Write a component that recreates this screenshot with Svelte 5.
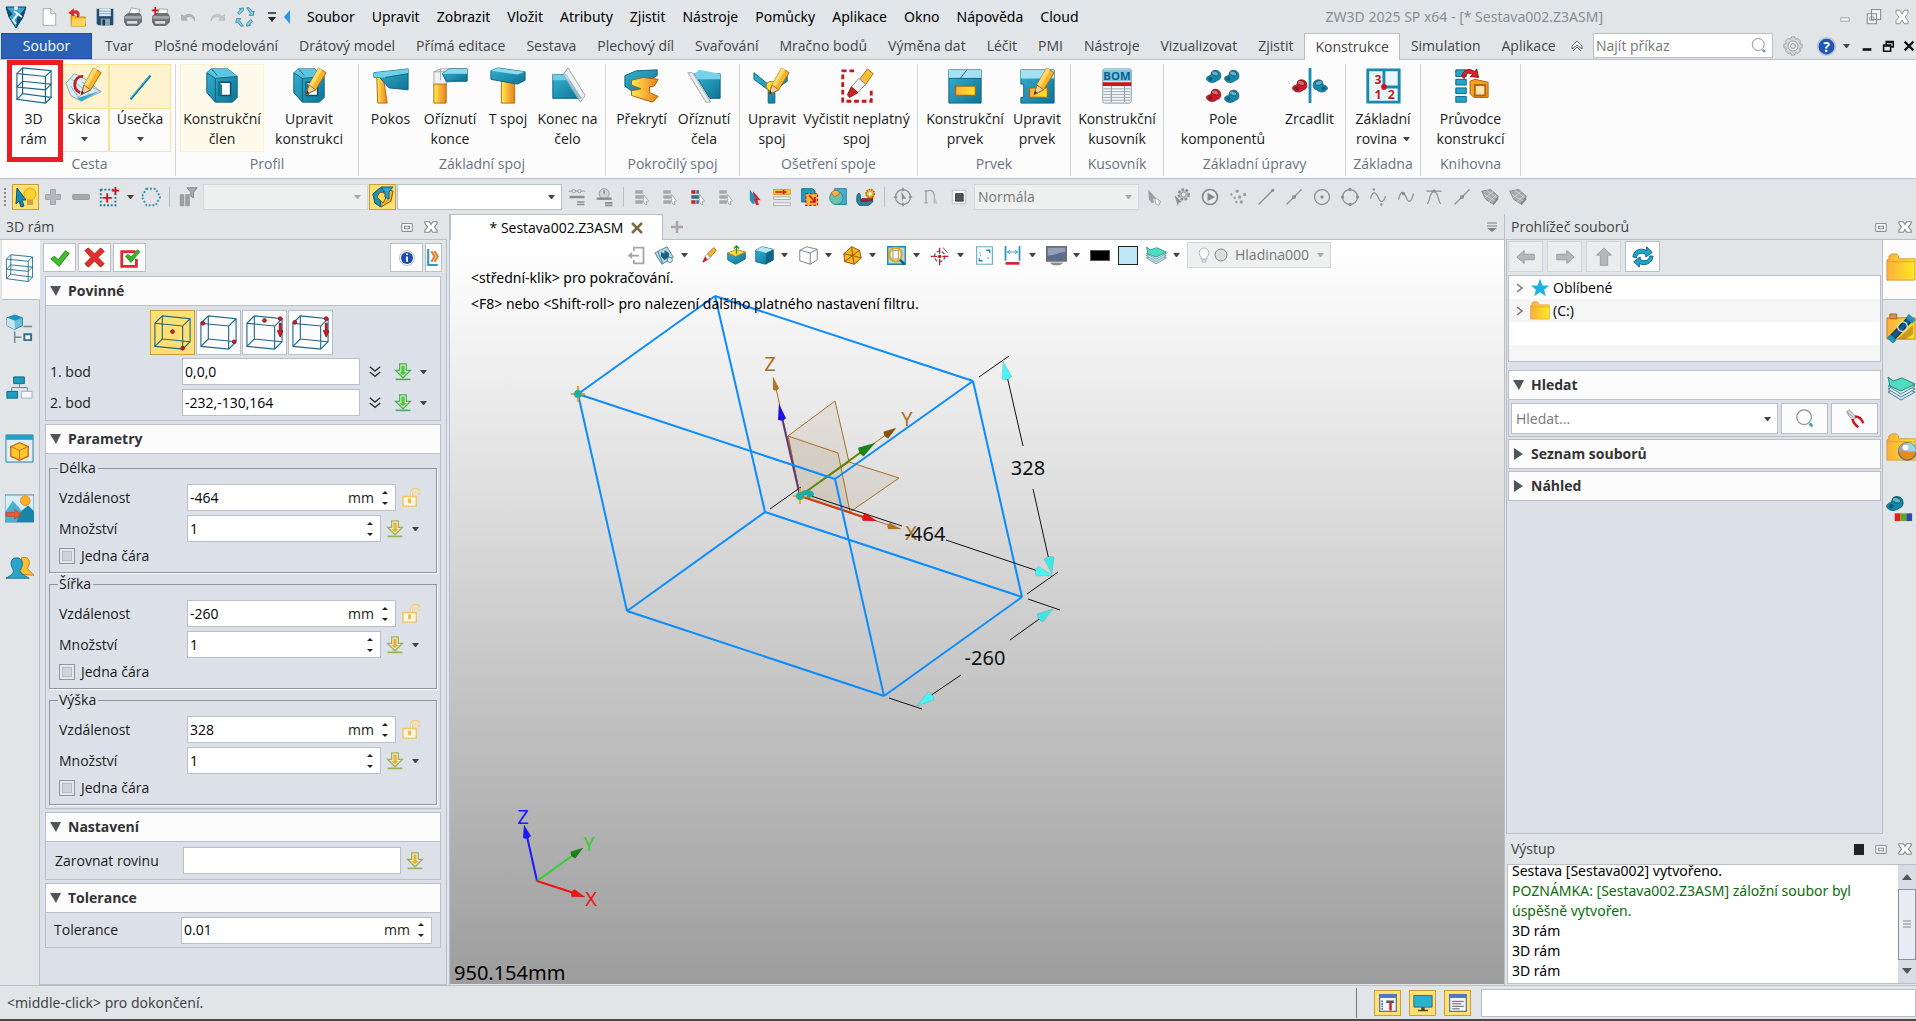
<script>
  const menus = ['Soubor', 'Upravit', 'Zobrazit', 'Vložit', 'Atributy', 'Zjistit', 'Nástroje', 'Pomůcky', 'Aplikace', 'Okno', 'Nápověda', 'Cloud']

  const tabs = [
    'Tvar', 'Plošné modelování', 'Drátový model', 'Přímá editace', 'Sestava', 'Plechový díl', 'Svařování',
    'Mračno bodů', 'Výměna dat', 'Léčit', 'PMI', 'Nástroje', 'Vizualizovat', 'Zjistit', 'Konstrukce', 'Simulation', 'Aplikace'
  ]
  let activeTab = 'Konstrukce'

  const groups = [
    { name: 'Cesta', tools: [
      { icon: 'frame', lines: ['3D', 'rám'], width: 51, marked: true },
      { icon: 'sketch', lines: ['Skica'], width: 50, drop: true },
      { icon: 'line', lines: ['Úsečka'], width: 62, drop: true }
    ] },
    { name: 'Profil', tools: [
      { icon: 'member', lines: ['Konstrukční', 'člen'], width: 84, soft: true },
      { icon: 'memberEdit', lines: ['Upravit', 'konstrukci'], width: 90 }
    ] },
    { name: 'Základní spoj', tools: [
      { icon: 'miter', lines: ['Pokos'], width: 55 },
      { icon: 'trimEnd', lines: ['Oříznutí', 'konce'], width: 64 },
      { icon: 'tJoint', lines: ['T spoj'], width: 52 },
      { icon: 'endFace', lines: ['Konec na', 'čelo'], width: 67 }
    ] },
    { name: 'Pokročilý spoj', tools: [
      { icon: 'overlap', lines: ['Překrytí'], width: 63 },
      { icon: 'trimFace', lines: ['Oříznutí', 'čela'], width: 62 }
    ] },
    { name: 'Ošetření spoje', tools: [
      { icon: 'jointEdit', lines: ['Upravit', 'spoj'], width: 56 },
      { icon: 'jointClean', lines: ['Vyčistit neplatný', 'spoj'], width: 113 }
    ] },
    { name: 'Prvek', tools: [
      { icon: 'feature', lines: ['Konstrukční', 'prvek'], width: 86 },
      { icon: 'featureEdit', lines: ['Upravit', 'prvek'], width: 58 }
    ] },
    { name: 'Kusovník', tools: [
      { icon: 'bom', lines: ['Konstrukční', 'kusovník'], width: 84 }
    ] },
    { name: 'Základní úpravy', tools: [
      { icon: 'pattern', lines: ['Pole', 'komponentů'], width: 110 },
      { icon: 'mirror', lines: ['Zrcadlit'], width: 63 }
    ] },
    { name: 'Základna', tools: [
      { icon: 'datum', lines: ['Základní', 'rovina'], width: 66, inlineDrop: true }
    ] },
    { name: 'Knihovna', tools: [
      { icon: 'library', lines: ['Průvodce', 'konstrukcí'], width: 91 }
    ] }
  ]

  const snapA = ['list', 'list', 'listRed', 'list', 'cursorRed', 'rows', 'layersSel', 'globe', 'gearCup']
  const snapB = ['cursorGray', 'cursorGear', 'play', 'dots', 'lineEnd', 'lineMid', 'circleDot', 'circle', 'wave', 'wave2', 'tangent', 'lineMid', 'mesh', 'mesh']

  const viewTools = [
    { icon: 'exit' },
    { icon: 'views', drop: true },
    { icon: 'eraser' },
    { icon: 'cubeTop' },
    { icon: 'cubeSolid', drop: true },
    { icon: 'cubeWire', drop: true },
    { icon: 'facet', drop: true },
    { icon: 'zoomFit', drop: true },
    { icon: 'target', drop: true },
    { icon: 'corners' },
    { icon: 'dimension', drop: true },
    { icon: 'monitor', drop: true }
  ]

  let dims = [
    { name: 'Délka', distance: '-464', count: '1' },
    { name: 'Šířka', distance: '-260', count: '1' },
    { name: 'Výška', distance: '328', count: '1' }
  ]
  let points = [
    { label: '1. bod', value: '0,0,0' },
    { label: '2. bod', value: '-232,-130,164' }
  ]
  const leftTabs = ['frame', 'history', 'structure', 'viewBox', 'scene', 'users']
  const rightTabs = ['folderBig', 'folderBolt', 'layers', 'folderBall', 'partColors']
  const boxModes = ['boxCenter', 'boxCorners', 'boxCenterH', 'boxCornerH']

  // corners of the frame: upper four first, lower four after
  const v = [[715, 296], [578, 394], [835, 479], [973, 381], [765, 512], [627, 611], [884, 696], [1022, 597]]
  const edges = [[0, 1], [1, 2], [2, 3], [3, 0], [4, 5], [5, 6], [6, 7], [7, 4], [0, 4], [1, 5], [2, 6], [3, 7]]

  function cone(tx, ty, bx, by, w) {
    const len = Math.hypot(bx - tx, by - ty)
    const nx = (-(by - ty) / len) * w
    const ny = ((bx - tx) / len) * w
    const ex = bx + ((bx - tx) / len) * 3
    const ey = by + ((by - ty) / len) * 3
    return `M${tx} ${ty}L${bx + nx} ${by + ny}Q${ex} ${ey} ${bx - nx} ${by - ny}Z`
  }

  const cones = [
    { d: cone(773, 377, 776, 389, 3), fill: '#b8761c' },
    { d: cone(779, 404, 782, 419, 4), fill: '#1a12e0' },
    { d: cone(896, 428, 886, 435, 4), fill: '#8a5208' },
    { d: cone(875, 443, 861, 452, 5), fill: '#1c8414' },
    { d: cone(901, 529, 889, 526, 3), fill: '#b8761c' },
    { d: cone(877, 521, 864, 517, 4), fill: '#ee1010' },
    { d: cone(1003, 361, 1007, 378, 5), fill: '#48f4f4' },
    { d: cone(1052, 574, 1049, 558, 5), fill: '#40e8e8' },
    { d: cone(1053, 576, 1037, 571, 5), fill: '#48f4f4' },
    { d: cone(1053, 609, 1040, 618, 5), fill: '#40e4e4' },
    { d: cone(917, 706, 931, 696, 5), fill: '#48f4f4' },
    { d: cone(524, 825, 527, 837, 4), fill: '#1a1aff' },
    { d: cone(583, 848, 573, 855, 4), fill: '#1c8414' },
    { d: cone(585, 897, 573, 893, 4), fill: '#f01414' }
  ]

  const wire = '<path d="M1 10L9 2 39 5 31 13ZM1 10V35L31 38V13M31 38L39 30V5M1 35L9 27V2M9 27L39 30" fill="none" stroke="#1d6688" stroke-width="1.2"/>'
  const pencil = '<path d="M17 29L20 19 30 1 38 6 27 24Z" fill="#f7b52c" stroke="#a9651b"/><path d="M20 19L30 1 34 3 23 22Z" fill="#ffd968"/><path d="M17 29L20 19 27 24Z" fill="#f3d3a6" stroke="#a9651b"/><path d="M17 29L18 25 20 27Z" fill="#222"/>'
  const tube = '<path d="M4 6L9 2H26L36 10V32L31 37H13L4 27Z" fill="url(#teal)" stroke="#10627e"/><path d="M4 6L9 2H26L36 10 14 12Z" fill="#5cc6e0"/><path d="M4 6L13 12 36 10M13 12V37M9 2L15 9" fill="none" stroke="#0d5f7c"/><path d="M17 16H29V30H17Z" fill="#fff" stroke="#0d4d66" stroke-width="1.5"/><path d="M17 16L20 19V30H17Z" fill="#117c9d"/>'
  const part = '<path d="M1 14C0 11 3 9 6 9L8 4C11 0 18 2 19 6 21 11 18 15 15 15 11 19 4 19 1 14Z" stroke-width="1"/><ellipse cx="12" cy="6" rx="5" ry="3" fill="#fff" fill-opacity=".35" transform="rotate(20 12 6)"/><circle cx="6" cy="13" r="2" fill="#083c52" fill-opacity=".5"/>'
  const folder = '<path d="M1 7H3V3L6 1H11L13 3V6H30V28H1Z" fill="url(#gold)" stroke="#d79a3a"/><path d="M1 9H30" stroke="#e0a030"/>'
  const down = (a, b) => `<path d="M7 1H15V9H20L11 18 2 9H7Z" fill="#f4f6ea" stroke="${b}" stroke-width="1.6"/><path d="M9 3H13V11H16L11 15 6 11H9Z" fill="${a}"/><path d="M2 20H20" stroke="${b}" stroke-width="2"/>`

  const icons = {
    frame: ['40', '<path d="M2 7L8 1 38 4 32 10ZM2 21L8 15 38 18 32 24ZM2 34L8 28 38 32 32 38ZM2 7V34M32 10V38M38 4V32M8 1V28" fill="none" stroke="#1d6688" stroke-width="1.2"/>'],
    sketch: ['40', '<path d="M1 17L10 7 20 12 38 26 17 36 6 30Z" fill="#dcecf4" stroke="#8ba7b5"/><path d="M6 12L27 30M11 34L31 20M17 36L6 20M38 26L18 16" stroke="#7db9d6" fill="none"/><path d="M13 33L37 25 17 36Z" fill="#37a9d0"/><path d="M19 10C9 9 7 24 16 27" fill="none" stroke="#c91820" stroke-width="3"/>' + pencil],
    line: ['40', '<path d="M10 34L31 9" stroke="#0f7b9d" stroke-width="2.4"/><path d="M10 33L30 9" stroke="#58c0dc"/>'],
    member: ['40', tube],
    memberEdit: ['40', tube + pencil],
    miter: ['40', '<path d="M5 11H12L16 38H6Z" fill="url(#wood)" stroke="#b16a12"/><path d="M2 6L38 2V24L18 22 8 11H2Z" fill="url(#teal)" stroke="#10627e"/><path d="M2 6L38 2V7L14 11H2Z" fill="#6fd0e8"/><path d="M14 11L38 7" stroke="#0d5f7c"/>'],
    trimEnd: ['40', '<path d="M3 5L10 2 38 2V14L16 16 16 20H3Z" fill="#eef0f1" stroke="#a4a9ad"/><path d="M3 5H16V20M10 2V14" fill="none" stroke="#a4a9ad"/><path d="M3 18H16V38H3Z" fill="url(#wood)" stroke="#b16a12"/><path d="M12 7L19 2H38V15H16Z" fill="url(#teal)" stroke="#10627e"/><path d="M12 7L19 2H38V7Z" fill="#8adbef"/>'],
    tJoint: ['40', '<path d="M13 15H27V38H13Z" fill="url(#wood)" stroke="#b16a12"/><path d="M2 4L9 1 38 5V14L30 18 2 13Z" fill="url(#teal)" stroke="#10627e"/><path d="M2 4L9 1 38 5 30 8Z" fill="#8adbef"/>'],
    endFace: ['40', '<path d="M4 8H18L34 33H4Z" fill="url(#teal)" stroke="#10627e"/><path d="M4 8H18L22 14H4Z" fill="#6fcde6"/><path d="M15 8L20 1 38 30 33 37Z" fill="#e6eaec" fill-opacity=".6" stroke="#9ba1a6"/>'],
    overlap: ['40', '<path d="M2 9L14 4 36 3V9L28 14V22L10 26 2 20Z" fill="url(#teal)" stroke="#10627e"/><path d="M9 14L21 11 37 13 33 20 28 21V27L37 31 31 37 9 30V25L19 23 9 19Z" fill="url(#wood)" stroke="#a55b0b"/>'],
    trimFace: ['40', '<path d="M10 7H37V33H26Z" fill="url(#teal)" stroke="#10627e"/><path d="M10 7L15 3 37 7V13H13Z" fill="#76d2e9"/><path d="M3 6H8L27 37H22Z" fill="#e8ebed" stroke="#a0a5a9"/>'],
    jointEdit: ['40', '<path d="M1 6L17 19 36 7V15L23 24V38H16V24L1 13Z" fill="url(#teal)" stroke="#10627e"/><circle cx="19" cy="20" r="5" fill="#ffd83a" stroke="#b48410"/>' + pencil],
    jointClean: ['40', '<path d="M17 4H5V36H35V24" fill="none" stroke="#c4161c" stroke-width="3" stroke-dasharray="5 3"/><path d="M22 14L31 2 37 7 28 20Z" fill="#f7bf36" stroke="#a9651b"/><path d="M14 21L22 12 29 18 21 27Z" fill="#f1f1f1" stroke="#888"/><path d="M14 21L21 27 12 32 10 29Z" fill="#cf2027" stroke="#8d1015"/>'],
    feature: ['40', '<path d="M3 3H37V38H3Z" fill="url(#teal)" stroke="#10627e"/><path d="M3 3H37V12H3Z" fill="#a4e1f1"/><path d="M15 12L22 3" stroke="#10627e"/><path d="M3 12H37" stroke="#10627e"/><path d="M10 20H31V30H10Z" fill="url(#gold)" stroke="#a9651b" stroke-width="1.5"/>'],
    featureEdit: ['40', '<path d="M3 3H38V38H3V32H6V18H3Z" fill="url(#teal)" stroke="#10627e"/><path d="M3 3H38V12H3Z" fill="#a4e1f1"/><path d="M12 22H31V32H12Z" fill="url(#gold)" stroke="#a9651b" stroke-width="1.5"/>' + pencil],
    bom: ['40', '<rect x="5" y="2" width="30" height="36" rx="2" fill="#f3f6f8" stroke="#7f97a6"/><path d="M5 3H35V15H5Z" fill="#79c8e6"/><path d="M5 16H35V20H5Z" fill="#d3131c"/><path d="M6 23H34M6 26H34M6 29H34M6 32H34M6 35H34" stroke="#9ba8b1"/><path d="M14 20V37M28 20V37" stroke="#7f97a6"/><text x="20" y="14" font-size="12" font-weight="700" text-anchor="middle" fill="#115d86">BOM</text>'],
    pattern: ['40', `<g fill="#1388ab" stroke="#0a556e"><g transform="translate(2 2) scale(.8)">${part}</g><g transform="translate(21 2) scale(.8)">${part}</g><g transform="translate(21 23) scale(.8)">${part}</g><g transform="translate(2 22) scale(.8)" fill="#c91d26" stroke="#7d0d13">${part}</g></g>`],
    mirror: ['40', `<g transform="translate(1 12) scale(.8)" fill="#c91d26" stroke="#7d0d13">${part}</g><g transform="matrix(-.8 0 0 .8 39 12)" fill="#1388ab" stroke="#0a556e">${part}</g><path d="M20 1V38" stroke="#1a8db0" stroke-width="3"/>`],
    datum: ['40', '<path d="M4 3H37V37H4Z" fill="#e9f7fc" stroke="#1988ab" stroke-width="3"/><path d="M21 3V21H37" fill="none" stroke="#1988ab" stroke-width="3"/><circle cx="21" cy="21" r="3" fill="#d3131c"/><g font-size="13" font-weight="700" fill="#c91820"><text x="11" y="18">3</text><text x="11" y="34">1</text><text x="25" y="34">2</text></g>'],
    library: ['40', '<path d="M4 3H15V10H4ZM4 13H15V19H4ZM4 22H15V28H4ZM4 31H15V37H4Z" fill="#24a6cb" stroke="#10627e"/><path d="M10 10C12 2 19 1 24 5L26 2 28 11 19 10 22 8C18 5 14 7 13 12Z" fill="#d8222b" stroke="#9b1016"/><path d="M19 15L24 13 38 16V32L33 32H23L19 28Z" fill="#f5a21e" stroke="#a55b0b"/><path d="M24 19H35V30H24Z" fill="#fbe3b4" stroke="#b4640b" stroke-width="2"/>'],

    logo: ['24', '<path d="M2 2H22L19 12 12 23 5 12Z" fill="#3aa6d6" stroke="#0a3f5e"/><path d="M2 2L9 9 5 12ZM22 2L13 13 12 23 19 12Z" fill="#0b4a70"/><path d="M10 6L14 9 9 15 12 19M14 9L18 12" fill="none" stroke="#e8f4fa" stroke-width="2"/><circle cx="12" cy="3" r="2" fill="#e8f4fa"/>'],
    newDoc: ['24', '<path d="M5 2H14L20 8V22H5Z" fill="#fdfdfd" stroke="#9da5ad"/><path d="M14 2V8H20" fill="#dfe4e8" stroke="#9da5ad"/>'],
    open: ['24', '<path d="M5 10H9L11 12H22V23H5Z" fill="#f8bb2f" stroke="#b97d10"/><path d="M7 14H23L21 23H5Z" fill="#ffd45c"/><path d="M14 12C17 5 11 3 8 5V2L2 7 8 11V8C11 7 13 8 12 12Z" fill="#dd2a22" stroke="#a01712" stroke-width=".5"/>'],
    save: ['24', '<path d="M2 2H22V22H4L2 20Z" fill="#234d6b"/><path d="M5 2H19V11H5Z" fill="#d9eef7"/><path d="M5 5H19M5 8H19" stroke="#67a7c6"/><path d="M7 14H18V22H7Z" fill="#8ba4b3"/><path d="M9 15H12V22H9Z" fill="#16364c"/>'],
    print: ['24', '<path d="M7 8L10 1 20 3 18 11Z" fill="#f6f6f6" stroke="#999"/><path d="M2 11L6 8H20L22 11V18L18 22H4L2 18Z" fill="#70757a" stroke="#4a4e52"/><path d="M2 11H22V14H2Z" fill="#a6abb0"/><path d="M5 17H17V20H5Z" fill="#e2e4e6"/>'],
    printAdd: ['24', '<path d="M8 8L10 2 20 3 18 11Z" fill="#f6f6f6" stroke="#999"/><path d="M2 11L6 8H20L22 11V18L18 22H4L2 18Z" fill="#70757a" stroke="#4a4e52"/><path d="M2 11H22V14H2Z" fill="#a6abb0"/><path d="M5 17H17V20H5Z" fill="#e2e4e6"/><path d="M5 0V9M1 4H9" stroke="#d3131c" stroke-width="2"/>'],
    undo: ['24', '<path d="M3 9V16H10L8 13C13 10 17 12 19 17 20 10 12 6 6 11Z" fill="#b0b4b8" stroke="#8d9195" stroke-width=".5"/>'],
    redo: ['24', '<path d="M21 9V16H14L16 13C11 10 7 12 5 17 4 10 12 6 18 11Z" fill="#c5c8cb" stroke="#a2a6aa" stroke-width=".5"/>'],
    refresh: ['24', '<g fill="#8fd3e8" stroke="#23809f"><path d="M10 1V4L5 9 3 7 7 3 5 2ZM14 1H17L21 6 23 5 22 10 17 10 19 8ZM14 23V20L19 15 21 17 17 21 19 22ZM10 23H7L3 18 1 19 2 14 7 14 5 16Z"/></g>'],
    gear: ['24', '<path d="M10 1H14L15 4 18 3 21 6 20 9 23 10V14L20 15 21 18 18 21 15 20 14 23H10L9 20 6 21 3 18 4 15 1 14V10L4 9 3 6 6 3 9 4Z" fill="#d6d6d6" stroke="#989898"/><circle cx="12" cy="12" r="6" fill="#f0f0f0" stroke="#8d8d8d"/><circle cx="12" cy="12" r="3" fill="#e1e5e8" stroke="#8d8d8d"/>'],
    help: ['24', '<circle cx="12" cy="12" r="10" fill="#2056b8" stroke="#bcc4d0" stroke-width="2"/><text x="12" y="18" text-anchor="middle" font-size="16" font-weight="700" fill="#fff">?</text>'],
    search: ['24', '<circle cx="11" cy="10" r="8" fill="none" stroke="#8b8f93" stroke-width="1.3"/><path d="M17 17L20 20" stroke="#4a9cc0" stroke-width="3"/>'],
    winMin: ['24', '<path d="M7 13H17V17H7Z" fill="#fff" stroke="#8b8b8b"/>'],
    winRestore: ['24', '<path d="M9 3H20V15H9ZM4 8H15V20H4Z" fill="#f2f2f2" stroke="#8b8b8b" stroke-width="1.3"/><path d="M7 12H12V16H7Z" fill="none" stroke="#8b8b8b"/>'],
    winClose: ['24', '<path d="M4 3H9L12 8 15 3H20V7L16 12 20 17V21H15L12 16 9 21H4V17L8 12 4 7Z" fill="#fff" stroke="#8b8b8b" stroke-width="1.3"/>'],
    pin: ['16', '<rect x="2" y="4" width="12" height="9" rx="1" fill="#fff" stroke="#8b8f93" stroke-width="1.3"/><rect x="5" y="7" width="6" height="3" fill="none" stroke="#777"/>'],
    close: ['16', '<path d="M1 2H6L8 5 10 2H15V4L12 8 15 12V14H10L8 11 6 14H1V12L4 8 1 4Z" fill="#fff" stroke="#85898d" stroke-width="1.3"/>'],
    mdiMin: ['16', '<path d="M3 12H13" stroke="#111" stroke-width="3"/>'],
    mdiRestore: ['16', '<path d="M6 6V3H14V9H11M3 7H11V14H3ZM3 8H11M6 4H14" fill="none" stroke="#111" stroke-width="1.8"/>'],
    mdiClose: ['16', '<path d="M3 3L13 13M13 3L3 13" stroke="#111" stroke-width="2.5"/>'],
    hide: ['16', '<path d="M3 8L8 3 13 8V11L8 7 3 11Z" fill="#fff" stroke="#666"/><path d="M4 13L8 9 12 13" fill="none" stroke="#666"/>'],

    pick: ['24', '<path d="M3 3L12 15 8 15 10 21 7 22 5 16 2 19Z" fill="#1b8db3" stroke="#0d5671"/><circle cx="16" cy="9" r="6" fill="#ffd12f" stroke="#e8a212"/><path d="M13 15H19V20H13Z" fill="#c9a24b"/>'],
    plus: ['24', '<path d="M9 3H15V9H21V15H15V21H9V15H3V9H9Z" fill="#b5b9bd" stroke="#989ca0"/>'],
    minus: ['24', '<rect x="2" y="9" width="20" height="6" rx="1" fill="#a5a9ad" stroke="#909498"/>'],
    selAdd: ['24', '<path d="M3 4H19V21H3Z" fill="none" stroke="#23738f" stroke-width="2" stroke-dasharray="2 2"/><path d="M10 8V18M5 13H15M19 1V9M15 5H23" stroke="#d3131c" stroke-width="2"/>'],
    hex: ['24', '<path d="M7 3H17L22 12 17 21H7L2 12Z" fill="none" stroke="#2a8fb0" stroke-width="2" stroke-dasharray="2 2"/>'],
    filter: ['24', '<path d="M3 9H8V22H3ZM9 9H14V22H9Z" fill="#9a9ea2"/><path d="M11 2H22L18 7V13L15 11V7Z" fill="#a9adb1" stroke="#7d8185"/>'],
    filterOn: ['24', '<path d="M2 9L9 3 22 6 20 16 10 22 4 18Z" fill="#f0b427" stroke="#7a5810"/><path d="M2 9L9 3 14 4 9 12 10 22 4 18Z" fill="#1c93ba" stroke="#0c607d"/><path d="M6 12L9 7 17 9 12 18Z" fill="#ffd95a" stroke="#7a5810"/><path d="M10 2H22L18 7V14L14 12V7Z" fill="#2ea7cb" stroke="#0c607d"/>'],
    ref1: ['24', '<g fill="none" stroke="#8b8f93"><path d="M2 5H22" stroke-width="1"/><circle cx="8" cy="5" r="2" fill="#e1e5e8"/><circle cx="15" cy="5" r="2" fill="#e1e5e8"/><path d="M3 12H21" stroke-width="3"/><path d="M12 18H21M12 21H21" stroke-width="2"/></g>'],
    ref2: ['24', '<circle cx="11" cy="8" r="6" fill="#d1d4d7" stroke="#8b8f93"/><path d="M2 14H20" stroke="#8b8f93" stroke-width="3"/><path d="M11 4V8M12 19H21M12 22H21" stroke="#8b8f93" stroke-width="2"/>'],
    list: ['24', '<path d="M4 4H13V8H4ZM4 10H13V14H4ZM4 16H13V20H4Z" fill="#a3a7ab"/><path d="M14 9L20 17 17 17 18 21 16 21 14 18Z" fill="#fff" stroke="#9a9ea2"/>'],
    listRed: ['24', '<path d="M4 4H9V8H4ZM4 16H9V20H4Z" fill="#c91d26"/><path d="M10 4H13V8H10ZM4 10H13V14H4ZM10 16H13V20H10Z" fill="#2b6f8c"/><path d="M14 9L20 17 17 17 18 21 16 21 14 18Z" fill="#fff" stroke="#9a9ea2"/>'],
    cursorRed: ['24', '<path d="M11 5L20 16 16 16 18 21 15 22 11 15Z" fill="#d3222a"/><path d="M7 3L15 14 11 14 13 20 10 20 7 16Z" fill="#1b93ba"/>'],
    rows: ['24', '<path d="M2 3H22V9H2Z" fill="#f9c435" stroke="#d39a18"/><path d="M4 5H13V3L18 6 13 9V7H4Z" fill="#c91820"/><path d="M2 12H22V15H2ZM2 19H22V22H2Z" fill="#fff" stroke="#9a9ea2"/>'],
    layersSel: ['24', '<path d="M2 2H15L18 5V18H2Z" fill="#1f9cc2" stroke="#0f607d"/><path d="M7 8H21V22H7Z" fill="#f3bb33" stroke="#c91820" stroke-width="1.5" stroke-dasharray="3 2"/><path d="M11 10L18 18M18 12V18H12" stroke="#c91820" fill="none" stroke-width="2"/>'],
    globe: ['24', '<path d="M8 2H22V21H8Z" fill="#3fb0d0" stroke="#1b7796"/><circle cx="10" cy="13" r="8" fill="#6bc3a9" stroke="#24798b"/><path d="M4 7C8 2 13 4 14 8L8 12Z" fill="#f5b04c" stroke="#b26a16"/>'],
    gearCup: ['24', '<path d="M1 13C1 7 5 6 5 10L6 17H14L20 15V18L15 22H4L1 18Z" fill="#1f88a8" stroke="#0c4d62"/><path d="M6 17H14L20 15V12L15 14H7Z" fill="#c91d26" stroke="#7d1016"/><circle cx="17" cy="8" r="5" fill="#f5b52c" stroke="#a66c0e" stroke-dasharray="2 1" stroke-width="2"/><circle cx="17" cy="8" r="2" fill="#fff"/>'],
    snapCircle: ['24', '<circle cx="12" cy="12" r="9" fill="none" stroke="#8b8f93" stroke-width="1.5"/><path d="M12 1V5M12 19V23M1 12H5M19 12H23" stroke="#8b8f93" stroke-width="2"/><path d="M10 6L16 14H12L11 18Z" fill="#8b8f93"/>'],
    snapArc: ['24', '<path d="M6 5V19M6 5C14 2 15 6 16 10V18L18 16M4 5H8M4 19H8" fill="none" stroke="#9a9ea2" stroke-width="1.5"/><path d="M16 10L20 20H16Z" fill="#c2c5c8"/>'],
    square: ['24', '<path d="M4 4H20V20H4Z" fill="#fafafa" stroke="#b4b8bc"/><path d="M8 8H17V17H8Z" fill="#555" stroke="#222"/>'],
    cursorGray: ['24', '<path d="M5 3L15 14 11 14 12 19 9 19 6 15Z" fill="#9a9ea2"/><path d="M13 13L20 17 18 22 14 20Z" fill="#f4f4f4" stroke="#9a9ea2"/>'],
    cursorGear: ['24', '<circle cx="14" cy="9" r="6" fill="#c3c6c9" stroke="#8b8f93" stroke-width="3" stroke-dasharray="3 2"/><circle cx="14" cy="9" r="3" fill="#e1e5e8" stroke="#8b8f93"/><path d="M3 10L12 18 8 19 7 23Z" fill="#8b8f93"/>'],
    play: ['24', '<circle cx="12" cy="12" r="9" fill="#e8e8e8" stroke="#85898d" stroke-width="2"/><path d="M9 7L18 12 9 17Z" fill="#85898d"/>'],
    dots: ['24', '<g fill="#9a9ea2"><circle cx="4" cy="9" r="1.5"/><circle cx="11" cy="5" r="2"/><circle cx="20" cy="9" r="2"/><circle cx="8" cy="13" r="1.5"/><circle cx="14" cy="12" r="2"/><circle cx="10" cy="18" r="1.5"/><circle cx="16" cy="18" r="2"/></g>'],
    lineEnd: ['24', '<path d="M3 21L20 4" stroke="#8b8f93" stroke-width="1.5"/><circle cx="20" cy="4" r="2" fill="#8b8f93"/>'],
    lineMid: ['24', '<path d="M3 21L21 3" stroke="#8b8f93" stroke-width="1.5"/><circle cx="12" cy="12" r="2.5" fill="#8b8f93"/>'],
    circleDot: ['24', '<circle cx="12" cy="12" r="9" fill="none" stroke="#8b8f93" stroke-width="1.5"/><circle cx="12" cy="12" r="2" fill="#8b8f93"/>'],
    circle: ['24', '<circle cx="12" cy="12" r="9" fill="none" stroke="#8b8f93" stroke-width="1.5"/><g fill="#8b8f93"><circle cx="12" cy="3" r="2"/><circle cx="12" cy="21" r="2"/><circle cx="3" cy="12" r="2"/><circle cx="21" cy="12" r="2"/></g>'],
    wave: ['24', '<path d="M3 14C5 5 9 5 12 12S18 20 21 11" fill="none" stroke="#8b8f93" stroke-width="1.5"/><circle cx="7" cy="3" r="1.5" fill="#8b8f93"/><circle cx="16" cy="21" r="1.5" fill="#8b8f93"/>'],
    wave2: ['24', '<path d="M3 15C6 3 9 5 12 12S18 20 21 8" fill="none" stroke="#8b8f93" stroke-width="1.5"/><circle cx="9" cy="8" r="2" fill="#8b8f93"/>'],
    tangent: ['24', '<path d="M3 5H21M4 20C7 18 7 5 12 5S17 18 20 20" fill="none" stroke="#8b8f93" stroke-width="1.5"/><circle cx="12" cy="5" r="2" fill="#8b8f93"/>'],
    mesh: ['24', '<path d="M2 5L13 3 22 11 15 20 7 15Z" fill="#a6aaae" stroke="#7d8185"/><path d="M5 9L18 17M8 4L20 13M6 13L16 5M11 18L20 9" stroke="#d4d7d9"/><path d="M15 20L22 11V15L16 22Z" fill="#85898d"/>'],

    exit: ['24', '<path d="M9 7V3H20V21H9V17" fill="none" stroke="#a2a6aa" stroke-width="2"/><path d="M2 12L7 8V11H15V13H7V16Z" fill="#a2a6aa"/>'],
    views: ['24', '<path d="M1 9L15 2 22 14 9 22Z" fill="#b4d6e5" stroke="#4a7d94"/><path d="M8 8L12 10V6L17 9V14L12 17 8 13Z" fill="#1b5e84"/><path d="M4 7L10 21" stroke="#4a7d94"/><circle cx="18" cy="17" r="3" fill="#d6eaf3" stroke="#4a7d94"/>'],
    eraser: ['24', '<path d="M11 10L18 3 21 6 14 14Z" fill="#f7b52c" stroke="#a9651b"/><path d="M8 13L11 10 14 14 11 17Z" fill="#eee" stroke="#999"/><path d="M8 13L11 17 6 20 5 19Z" fill="#cf2027"/>'],
    cubeTop: ['24', '<path d="M2 9V17L11 22 22 16V8L11 13Z" fill="url(#teal)" stroke="#10627e"/><path d="M2 9L12 5 22 8 11 13Z" fill="#ffd738" stroke="#b98b13"/><path d="M12 1V10M9 4L12 1 15 4" stroke="#22902a" fill="none" stroke-width="1.5"/>'],
    cubeSolid: ['24', '<path d="M2 6L9 2 22 5V17L13 22 2 19Z" fill="url(#teal)" stroke="#10627e"/><path d="M2 6L9 2 22 5 14 9Z" fill="#b6e6f3"/><path d="M14 9L22 5V17L13 22Z" fill="#0d6687"/>'],
    cubeWire: ['24', '<path d="M2 6L10 2 22 5V17L14 22 2 18ZM2 6L14 9 22 5M14 9V22" fill="#fdfdfd" stroke="#6b7780"/>'],
    facet: ['24', '<path d="M11 2L20 6 22 15 14 22 3 19 2 10Z" fill="#f9b51f" stroke="#7b4b0a"/><path d="M11 2L12 12 20 6M12 12L22 15M12 12L14 22M12 12L3 19M12 12L2 10" fill="none" stroke="#7b4b0a"/>'],
    zoomFit: ['24', '<path d="M2 2H22V22H2Z" fill="#a9dcec" stroke="#22809f" stroke-width="1.5"/><ellipse cx="11" cy="11" rx="7" ry="8" fill="#fff4d0" stroke="#e0a920" stroke-width="2.5"/><path d="M8 6H14V16H8Z" fill="#fff" stroke="#888"/><path d="M16 17L21 22" stroke="#1b5e84" stroke-width="3"/>'],
    target: ['24', '<circle cx="11" cy="13" r="6" fill="none" stroke="#25759a" stroke-width="1.5" stroke-dasharray="4 2"/><path d="M11 3V10M11 16V23M1 13H8M14 13H21" stroke="#d3131c" stroke-width="1.5"/><path d="M15 3L20 9" stroke="#d3131c"/><circle cx="11" cy="13" r="2" fill="#d3131c"/>'],
    corners: ['24', '<path d="M3 2H21V22H3Z" fill="#f7fcfe" stroke="#6fa9bf" stroke-width="1.3"/><path d="M14 6H18V9M6 15V18H10" fill="none" stroke="#2a7fa3" stroke-width="1.5"/><path d="M6 9H8M15 15H17M7 12H8" stroke="#6fa9bf" stroke-width="1.5"/>'],
    dimension: ['24', '<path d="M4 1V18M20 1V18" stroke="#2a95b9" stroke-width="2"/><path d="M6 8H18M9 6L6 8 9 10M15 6L18 8 15 10" stroke="#2a95b9" fill="none"/><path d="M4 21H20" stroke="#d3222a" stroke-width="3"/>'],
    monitor: ['24', '<path d="M1 2H23V18H1Z" fill="#5d6c8b" stroke="#6b6e72" stroke-width="2"/><path d="M2 3H22V8C16 8 10 12 2 12Z" fill="#95a0b8"/><path d="M4 20H20L16 23H8Z" fill="#8b8f93"/>'],
    layers: ['30', '<path d="M2 19L15 13 29 19 15 27Z" fill="#d8eaf1" stroke="#417f96"/><path d="M2 16L15 10 29 16 15 24Z" fill="#eaf5f9" stroke="#417f96"/><path d="M2 13L15 7 29 13 15 21Z" fill="#d8eaf1" stroke="#417f96"/><path d="M2 4L7 8 16 5 29 11 15 18 4 13Z" fill="#4fdcc0" stroke="#1b8a78"/>'],
    bulb: ['16', '<path d="M5 10C1 6 4 1 8 1S15 6 11 10V12H5ZM6 13H10V15H6Z" fill="#fafafa" stroke="#aeb2b6"/>'],
    ball: ['16', '<circle cx="8" cy="8" r="6" fill="#dcdcdc" stroke="#808488"/>'],

    ok: ['24', '<path d="M2 13L6 10 10 14 18 4 22 7 11 21Z" fill="#41bd2e" stroke="#1e7d14"/>'],
    cancel: ['24', '<path d="M1 4L5 1 12 8 19 1 23 5 16 12 23 19 19 23 12 16 5 23 1 19 8 12Z" fill="#e3302a" stroke="#a2150f"/>'],
    apply: ['24', '<path d="M19 13V21H3V5H18" fill="none" stroke="#e3262c" stroke-width="3"/><path d="M7 10L10 8 13 11 20 3 23 5 13 17Z" fill="#35b52a" stroke="#1e7d14" stroke-width=".7"/>'],
    info: ['24', '<circle cx="12" cy="12" r="10" fill="#fff" stroke="#a4a9b4"/><circle cx="12" cy="12" r="8" fill="#1d4bb4"/><path d="M12 6V8M12 10V17" stroke="#fff" stroke-width="2.5"/>'],
    expand: ['16', '<path d="M3 0V15M2 15H12" stroke="#2a9cc0" stroke-width="2"/><path d="M6 2L9 7 6 12M9 2L12 7 9 12" fill="none" stroke="#dd8130" stroke-width="2"/>'],
    chevrons: ['16', '<path d="M2 2L8 7 14 2M2 8L8 13 14 8" fill="none" stroke="#333" stroke-width="1.6"/>'],
    downGreen: ['22', down('#44cf31', '#49ad52')],
    downGold: ['22', down('#eeb02e', '#9cae52')],
    lock: ['22', '<path d="M2 10H16V20H2Z" fill="#fdf6e2" stroke="#f2c25c" stroke-width="1.5"/><path d="M11 10V6C11 1 19 1 19 6V8" fill="none" stroke="#f5cc74" stroke-width="3"/><path d="M11 9V6C11 2 19 2 19 6V7" fill="none" stroke="#fdf6e2"/><path d="M9 12V17" stroke="#f0b93c" stroke-width="3"/>'],
    boxCenter: ['40', wire + '<g fill="#d3222a" stroke="#8d1015"><circle cx="20" cy="19" r="2"/><circle cx="31" cy="37" r="2"/></g>'],
    boxCorners: ['40', wire + '<g fill="#d3222a" stroke="#8d1015"><circle cx="3" cy="10" r="2"/><circle cx="37" cy="30" r="2"/></g>'],
    boxCenterH: ['40', wire + '<g fill="#d3222a" stroke="#8d1015"><circle cx="20" cy="7" r="2"/><circle cx="37" cy="5" r="2"/><path d="M36 10H38V18H40L37 25 34 18H36Z"/></g>'],
    boxCornerH: ['40', wire + '<g fill="#d3222a" stroke="#8d1015"><circle cx="3" cy="9" r="2"/><circle cx="37" cy="5" r="2"/><path d="M36 10H38V18H40L37 25 34 18H36Z"/></g>'],

    history: ['30', '<path d="M2 4L10 1 18 4V12L10 16 2 12Z" fill="#6fbfdd" stroke="#2f7f9e"/><path d="M2 4L10 1 18 4 10 7Z" fill="#1e93b8"/><path d="M2 4L10 7V16L2 12Z" fill="#c3e6f2"/><path d="M19 13H28M10 18V30M10 24H17" stroke="#6d8794" fill="none" stroke-width="1.5"/><path d="M20 21H27V27H20Z" fill="#f4f7f9" stroke="#2f6f8b" stroke-width="2"/>'],
    structure: ['30', '<path d="M9 3H20V10H9Z" fill="#1e9cc2" stroke="#0f6886"/><path d="M15 10V14M7 18V14H23V18" fill="none" stroke="#6d8794"/><path d="M2 18H13V25H2Z" fill="#1e9cc2" stroke="#0f6886"/><path d="M17 18H28V25H17Z" fill="#f2f7f9" stroke="#8fb5c4"/>'],
    viewBox: ['30', '<path d="M1 1H29V29H1Z" fill="#dff1f8" stroke="#2b7d9c"/><path d="M1 1H29V6H1Z" fill="#249fc4"/><path d="M6 13L15 9 24 13V23L15 27 6 23Z" fill="#ffc928" stroke="#d2691e" stroke-width="1.5"/><path d="M6 13L15 17 24 13M15 17V27" fill="none" stroke="#d2691e"/>'],
    scene: ['30', '<path d="M0 1H30V29H0Z" fill="#d5eefa" stroke="#4a8ba5"/><path d="M0 19L8 7 17 17 24 12 30 18V29H0Z" fill="#4ab0d0"/><path d="M15 20L24 12 30 18V29H12Z" fill="#1985a6"/><circle cx="21" cy="7" r="5" fill="#fbb22a" stroke="#ef8a17"/><path d="M1 19H10V16L17 21 10 26V23H1Z" fill="#f0562a" stroke="#b93412" stroke-width=".5"/>'],
    users: ['30', '<path d="M17 4C26 1 27 10 23 15L30 22 16 21Z" fill="#ffbd33" stroke="#c98412"/><path d="M12 4C20 4 19 14 15 17 16 20 20 22 25 25H1C5 23 9 20 9 17 5 12 5 4 12 4Z" fill="#2aa5c9" stroke="#15708d"/>'],

    left: ['24', '<path d="M2 12L10 5V9H21V15H10V19Z" fill="#b5b8bb" stroke="#96999c"/>'],
    right: ['24', '<path d="M22 12L14 5V9H3V15H14V19Z" fill="#b5b8bb" stroke="#96999c"/>'],
    up: ['24', '<path d="M12 2L20 10H16V21H8V10H4Z" fill="#b5b8bb" stroke="#96999c"/>'],
    reload: ['24', '<path d="M1 12C2 3 11 2 16 5V1L22 7 15 12V9C10 7 5 8 5 13Z" fill="#1fa6cf" stroke="#0c5f7c"/><path d="M23 11C22 20 13 22 8 19V23L2 17 9 12V15C14 17 19 16 19 11Z" fill="#1fa6cf" stroke="#0c5f7c"/>'],
    star: ['24', '<path d="M12 1L15 9H23L17 14 19 22 12 17 5 22 7 14 1 9H9Z" fill="#1fb2e0"/>'],
    folder: ['31', folder],
    folderBig: ['31', folder],
    folderBolt: ['31', '<path d="M1 5H30V27H1Z" fill="url(#gold)" stroke="#c97d22"/><path d="M4 1H11V6H4Z" fill="#d9925a" stroke="#a9651b"/><path d="M12 27L28 12V22L20 27Z" fill="#a9701a" fill-opacity=".6"/><path d="M4 28L26 5" stroke="#0c3b58" stroke-width="7"/><path d="M4 28L26 5" stroke="#1a5c88" stroke-width="4"/><path d="M3 24L9 30M22 3L29 9" stroke="#1f93b8" stroke-width="5"/><circle cx="17" cy="14" r="5" fill="none" stroke="#cfd9e0" stroke-width="1.5"/>'],
    folderBall: ['31', folder + '<circle cx="22" cy="19" r="9" fill="#e88b1a" stroke="#54788a" stroke-width="1.5"/><path d="M13 19C13 7 31 7 31 19Z" fill="#9bd5ea"/><path d="M13 19H22V10C16 10 13 14 13 19Z" fill="#d5483a" fill-opacity=".4"/><circle cx="20" cy="15" r="3" fill="#fff"/>'],
    partColors: ['31', `<g fill="#1388ab" stroke="#0a556e" transform="translate(0 2) scale(.9)">${part}</g><path d="M9 21H15V29H9Z" fill="#e2231a"/><path d="M15 21H21V29H15Z" fill="#62a52c"/><path d="M21 21H27V29H21Z" fill="#2c4c9c"/>`],
    pliers: ['24', '<path d="M2 3L5 1 12 8 13 11 9 13 5 9Z" fill="#d5d8da" stroke="#8b8f93"/><path d="M3 4L10 10" stroke="#8b8f93"/><path d="M12 9C17 9 20 12 22 17M9 12C10 17 12 19 16 22" fill="none" stroke="#d3131c" stroke-width="3"/>'],
    stTools: ['24', '<path d="M2 2H22V22H2Z" fill="#f3f6fb" stroke="#5872a8" stroke-width="1.5"/><path d="M2 2H22V6H2Z" fill="#5078c8"/><path d="M5 9V20" stroke="#5872a8" stroke-width="2" stroke-dasharray="2 1"/><path d="M10 9H19V12H10Z" fill="#555"/><path d="M15 12V21" stroke="#d3222a" stroke-width="3"/>'],
    stMonitor: ['24', '<path d="M1 3H23V17H1Z" fill="#27b3d0" stroke="#3c5a68"/><path d="M10 17H14V20H10ZM6 20H18V22H6Z" fill="#444"/>'],
    stList: ['24', '<path d="M2 2H22V22H2Z" fill="#f3f6fb" stroke="#5872a8" stroke-width="1.5"/><path d="M2 2H22V6H2Z" fill="#5078c8"/><path d="M5 10H19M5 13H16M5 16H19M5 19H14" stroke="#444"/>']
  }
</script>

{#snippet icon(name, size = 24)}
  <svg class="icon" width={size} height={size} viewBox="0 0 {icons[name][0]} {icons[name][0]}" aria-hidden="true">{@html icons[name][1]}</svg>
{/snippet}

{#snippet caret()}
  <svg class="icon" width="7" height="4" viewBox="0 0 7 4" aria-hidden="true"><path d="M0 0H7L4 4H3Z" fill="#444" /></svg>
{/snippet}

{#snippet spinner()}
  <span class="spin">
    <button aria-label="Více"><svg class="icon" width="6" height="3" viewBox="0 0 6 3"><path d="M0 3L3 0 6 3Z" fill="#222" /></svg></button>
    <button aria-label="Méně"><svg class="icon" width="6" height="3" viewBox="0 0 6 3"><path d="M0 0H6L3 3Z" fill="#222" /></svg></button>
  </span>
{/snippet}

{#snippet sectionHead(title, open = true)}
  <h2 class="section-head">
    <button aria-expanded={open}>
      <svg class="icon" width="12" height="12" viewBox="0 0 12 12"><path d={open ? 'M0 1H11L6 11Z' : 'M1 0L10 6 1 12Z'} fill="#50555c" /></svg>
      {title}
    </button>
  </h2>
{/snippet}

<svg class="defs" width="0" height="0" aria-hidden="true">
  <defs>
    <linearGradient id="teal" x1="0" y1="0" x2="1" y2="1"><stop offset="0" stop-color="#35b3d3" /><stop offset="1" stop-color="#0d7395" /></linearGradient>
    <linearGradient id="wood"><stop offset="0" stop-color="#fff04a" /><stop offset=".5" stop-color="#f7b13a" /><stop offset="1" stop-color="#e8841a" /></linearGradient>
    <linearGradient id="gold"><stop offset="0" stop-color="#fbae3c" /><stop offset="1" stop-color="#fdea20" /></linearGradient>
  </defs>
</svg>

<div class="app">
  <header class="titlebar">
    <div class="quick">
      <span class="logo">{@render icon('logo')}</span>
      {#each ['newDoc', 'open', 'save', 'print', 'printAdd', 'undo', 'redo', 'refresh'] as name}
        <button class="cell" aria-label={name}>{@render icon(name, 20)}</button>
      {/each}
      <svg class="icon" width="10" height="12" viewBox="0 0 10 12"><path d="M1 2H9" stroke="#222" stroke-width="1.5" /><path d="M1 6H9L5 11Z" fill="#222" /></svg>
      <svg class="icon" width="8" height="16" viewBox="0 0 8 16"><path d="M7 1V15L1 8Z" fill="#2b96e9" /></svg>
    </div>
    <nav class="menus">
      {#each menus as item}
        <a href="#{item}">{item}</a>
      {/each}
    </nav>
    <span class="doc-title">ZW3D 2025 SP x64 - [* Sestava002.Z3ASM]</span>
    <div class="win">
      <button aria-label="Minimalizovat">{@render icon('winMin', 20)}</button>
      <button aria-label="Obnovit">{@render icon('winRestore', 20)}</button>
      <button aria-label="Zavřít">{@render icon('winClose', 18)}</button>
    </div>
  </header>

  <div class="tabrow">
    <button class="file-tab">Soubor</button>
    {#each tabs as tab}
      <button class="tab" class:active={tab === activeTab}>{tab}</button>
    {/each}
    <button class="hide" aria-label="Skrýt pás">{@render icon('hide', 16)}</button>
    <div class="find">
      <input type="text" placeholder="Najít příkaz" aria-label="Najít příkaz" />
      {@render icon('search', 18)}
    </div>
    <div class="help">
      <button aria-label="Nastavení">{@render icon('gear', 20)}</button>
      <button aria-label="Nápověda">{@render icon('help', 21)}{@render caret()}</button>
    </div>
    <div class="mdi">
      <button aria-label="Minimalizovat dokument">{@render icon('mdiMin', 14)}</button>
      <button aria-label="Obnovit dokument">{@render icon('mdiRestore', 14)}</button>
      <button aria-label="Zavřít dokument">{@render icon('mdiClose', 14)}</button>
    </div>
  </div>

  <div class="ribbon">
    {#each groups as group}
      <section class="group">
        <div class="tools">
          {#each group.tools as tool}
            <button class="tool" class:hot={tool.drop} class:soft={tool.soft} class:marked={tool.marked} style="width: {tool.width}px">
              <span class="tool-icon">{@render icon(tool.icon, 38)}</span>
              {#each tool.lines as line, i}
                <span class="tool-line">{line}{#if tool.inlineDrop && i === 1}{@render caret()}{/if}</span>
              {/each}
              {#if tool.drop}<span class="tool-line">{@render caret()}</span>{/if}
            </button>
          {/each}
        </div>
        <span class="group-name">{group.name}</span>
      </section>
    {/each}
  </div>

  <div class="selbar">
    <span class="grip"></span>
    <button class="on" aria-label="Výběr">{@render icon('pick')}</button>
    <button class="cell" aria-label="Přidat">{@render icon('plus', 20)}</button>
    <button class="cell" aria-label="Odebrat">{@render icon('minus', 20)}</button>
    <button class="cell" aria-label="Okno">{@render icon('selAdd', 22)}</button>
    <span class="drop">{@render caret()}</span>
    <button class="cell" aria-label="Polygon">{@render icon('hex', 22)}</button>
    <span class="sep"></span>
    <button class="cell" aria-label="Filtr">{@render icon('filter', 22)}</button>
    <div class="combo off"><select aria-label="Typ filtru" disabled><option></option></select>{@render caret()}</div>
    <button class="on" aria-label="Filtr zapnut">{@render icon('filterOn')}</button>
    <div class="combo"><select aria-label="Filtr"><option></option></select>{@render caret()}</div>
    <button class="cell" aria-label="Reference">{@render icon('ref1', 20)}</button>
    <button class="cell" aria-label="Historie">{@render icon('ref2', 20)}</button>
    <span class="sep"></span>
    {#each snapA as name}
      <button class="cell" aria-label={name}>{@render icon(name, 20)}</button>
    {/each}
    <span class="sep"></span>
    {#each ['snapCircle', 'snapArc', 'square'] as name}
      <button class="cell" aria-label={name}>{@render icon(name, 20)}</button>
    {/each}
    <div class="combo off"><select aria-label="Směr" disabled><option>Normála</option></select>{@render caret()}</div>
    {#each snapB as name}
      <button class="cell" aria-label={name}>{@render icon(name, 20)}</button>
    {/each}
  </div>

  <main class="work">
    <aside class="left">
      <div class="dock-title">
        <span>3D rám</span>
        <button aria-label="Připnout">{@render icon('pin', 14)}</button>
        <button aria-label="Zavřít panel">{@render icon('close', 14)}</button>
      </div>
      <div class="left-body">
        <div class="strip">
          {#each leftTabs as name, i}
            <button class:current={i === 0} aria-label={name}>{@render icon(name, 29)}</button>
          {/each}
        </div>
        <div class="cmd">
          <div class="cmd-bar">
            <button aria-label="OK">{@render icon('ok', 22)}</button>
            <button aria-label="Zrušit">{@render icon('cancel', 21)}</button>
            <button aria-label="Použít">{@render icon('apply', 22)}</button>
            <button class="push" aria-label="Informace">{@render icon('info', 18)}</button>
            <button class="thin" aria-label="Rozbalit">{@render icon('expand', 17)}</button>
          </div>

          <section class="section">
            {@render sectionHead('Povinné')}
            <div class="required">
              <div class="modes">
                {#each boxModes as mode, i}
                  <button class:chosen={i === 0} aria-label={mode}>{@render icon(mode, 37)}</button>
                {/each}
              </div>
              {#each points as point, i}
                <div class="row">
                  <label for="point{i}">{point.label}</label>
                  <div class="field"><input id="point{i}" type="text" bind:value={point.value} /></div>
                  <button class="more" aria-label="Další">{@render icon('chevrons', 14)}</button>
                  <button class="fetch" aria-label="Vybrat bod">{@render icon('downGreen', 18)}{@render caret()}</button>
                </div>
              {/each}
            </div>
          </section>

          <section class="section">
            {@render sectionHead('Parametry')}
            <div class="params">
              {#each dims as dim, i}
                <fieldset>
                  <legend>{dim.name}</legend>
                  <div class="row">
                    <label for="dist{i}">Vzdálenost</label>
                    <div class="field long"><input id="dist{i}" type="text" bind:value={dim.distance} /><span>mm</span>{@render spinner()}</div>
                    <button class="tail" aria-label="Zámek">{@render icon('lock', 21)}</button>
                  </div>
                  <div class="row">
                    <label for="count{i}">Množství</label>
                    <div class="field mid"><input id="count{i}" type="text" bind:value={dim.count} />{@render spinner()}</div>
                    <button class="fetch tail" aria-label="Načíst">{@render icon('downGold', 18)}{@render caret()}</button>
                  </div>
                  <label class="check"><input type="checkbox" />Jedna čára</label>
                </fieldset>
              {/each}
            </div>
          </section>

          <section class="section">
            {@render sectionHead('Nastavení')}
            <div class="settings row">
              <label for="plane">Zarovnat rovinu</label>
              <div class="field"><input id="plane" type="text" /></div>
              <button class="tail" aria-label="Vybrat rovinu">{@render icon('downGold', 18)}</button>
            </div>
          </section>

          <section class="section">
            {@render sectionHead('Tolerance')}
            <div class="tolerance row">
              <label for="tol">Tolerance</label>
              <div class="field"><input id="tol" type="text" value="0.01" /><span>mm</span>{@render spinner()}</div>
            </div>
          </section>
        </div>
      </div>
    </aside>

    <section class="center">
      <div class="doc-tabs">
        <button class="doc-tab">* Sestava002.Z3ASM
          <svg class="icon" width="12" height="12" viewBox="0 0 12 12"><path d="M1 1L11 11M11 1L1 11" stroke="#7d6a43" stroke-width="2.5" /></svg>
        </button>
        <button class="add" aria-label="Nová karta"><svg class="icon" width="14" height="14" viewBox="0 0 14 14"><path d="M7 1V13M1 7H13" stroke="#aaa4a4" stroke-width="2.5" /></svg></button>
        <button class="tab-list" aria-label="Seznam karet"><svg class="icon" width="10" height="10" viewBox="0 0 10 10"><path d="M0 1H10M0 4H10" stroke="#a59c9c" stroke-width="1.5" /><path d="M0 6H10L5 10Z" fill="#857c7c" /></svg></button>
      </div>
      <div class="canvas">
        <svg class="scene">
          <g transform="translate(-450 -240)">
            <g fill="#a07840" fill-opacity=".1" stroke="#a8701e">
              <path d="M800 496L788 436 835 401 849 462Z" />
              <path d="M800 496L849 462 899 478 850 512Z" />
              <path d="M800 496L788 436 838 453 850 512Z" />
            </g>
            <g fill="none" stroke-width="1">
              <path d="M800 496L775 384M800 496L890 432M800 496L895 527" stroke="#a8701e" />
              <path d="M800 496L782 418" stroke="#5f3a80" stroke-width="2" />
              <path d="M800 496L864 450" stroke="#5c8a08" stroke-width="2" />
              <path d="M800 496L866 518" stroke="#cf3a10" stroke-width="2" />
            </g>
            <g stroke="#0a8cff" stroke-width="2">
              {#each edges as [a, b]}
                <line x1={v[a][0]} y1={v[a][1]} x2={v[b][0]} y2={v[b][1]} />
              {/each}
            </g>
            <path d="M770 509L801 487M811 496L902 526M946 540L1038 571M979 377L1009 356M1007 376L1023 446M1033 489L1049 560M1027 594L1058 572M1028 599L1060 610M1042 617L1010 640M961 675L930 696M889 698L922 709" fill="none" stroke="#111" />
            <ellipse cx="807" cy="494" rx="7" ry="4" fill="#1fa9a4" />
            {#each [[578, 394], [800, 496]] as [x, y]}
              <path d="M{x - 7} {y}H{x + 7}M{x} {y - 8}V{y + 8}" stroke="#ff9d1a" stroke-width="2" />
              <circle cx={x} cy={y} r="4" fill="#1fb0a4" />
            {/each}
            <g fill="none" stroke-width="2">
              <path d="M537 881L526 832" stroke="#1a1aff" />
              <path d="M537 881L576 853" stroke="#30d030" />
              <path d="M537 881L577 894" stroke="#f01414" />
            </g>
            {#each cones as c}
              <path d={c.d} fill={c.fill} stroke="#000" stroke-opacity=".2" stroke-width=".5" />
            {/each}
            <g class="axis" fill="#a8701e">
              <text x="770" y="371">Z</text>
              <text x="907" y="426">Y</text>
              <text x="911" y="540">X</text>
            </g>
            <g class="axis">
              <text x="523" y="824" fill="#1a1aff">Z</text>
              <text x="589" y="851" fill="#30d030">Y</text>
              <text x="591" y="906" fill="#f01414">X</text>
            </g>
            <g class="axis" fill="#111">
              <text x="1028" y="475">328</text>
              <text x="925" y="541">-464</text>
              <text x="985" y="665">-260</text>
            </g>
          </g>
        </svg>
        <div class="view-bar">
          {#each viewTools as tool}
            <button aria-label={tool.icon}>{@render icon(tool.icon, 21)}</button>
            {#if tool.drop}<span class="drop">{@render caret()}</span>{/if}
          {/each}
          <button aria-label="Barva čáry"><span class="ink"></span></button>
          <button aria-label="Barva plochy"><span class="fill"></span></button>
          <button aria-label="Hladiny">{@render icon('layers', 22)}</button>
          <span class="drop">{@render caret()}</span>
          <div class="combo off level">
            {@render icon('bulb', 16)}
            {@render icon('ball', 16)}
            <select aria-label="Hladina" disabled><option>Hladina000</option></select>
            {@render caret()}
          </div>
        </div>
        <p class="hint">&lt;střední-klik&gt; pro pokračování.</p>
        <p class="hint">&lt;F8&gt; nebo &lt;Shift-roll&gt; pro nalezení dalšího platného nastavení filtru.</p>
        <span class="scale">950.154mm</span>
      </div>
    </section>

    <aside class="right">
      <div class="dock-title">
        <span>Prohlížeč souborů</span>
        <button aria-label="Připnout prohlížeč">{@render icon('pin', 14)}</button>
        <button aria-label="Zavřít prohlížeč">{@render icon('close', 14)}</button>
      </div>
      <div class="right-body">
        <div class="files">
          <div class="nav-bar">
            <button disabled aria-label="Zpět">{@render icon('left', 22)}</button>
            <button disabled aria-label="Vpřed">{@render icon('right', 22)}</button>
            <button disabled aria-label="Nahoru">{@render icon('up', 22)}</button>
            <button aria-label="Obnovit">{@render icon('reload', 22)}</button>
          </div>
          <ul class="tree">
            {#each [['star', 'Oblíbené'], ['folder', '(C:)']] as [name, label]}
              <li>
                <svg class="icon" width="8" height="10" viewBox="0 0 8 10"><path d="M1 1L6 5 1 9" fill="none" stroke="#777" stroke-width="1.5" /></svg>
                {@render icon(name, 20)}
                {label}
              </li>
            {/each}
            <li></li>
            <li></li>
          </ul>
          <section class="section">
            {@render sectionHead('Hledat')}
            <div class="search-row">
              <div class="combo-text">
                <input type="text" placeholder="Hledat..." aria-label="Hledat" />
                {@render caret()}
              </div>
              <button aria-label="Spustit hledání">{@render icon('search', 22)}</button>
              <button aria-label="Nástroje hledání">{@render icon('pliers', 20)}</button>
            </div>
          </section>
          <section class="section folded">{@render sectionHead('Seznam souborů', false)}</section>
          <section class="section folded">{@render sectionHead('Náhled', false)}</section>
        </div>
        <div class="strip">
          {#each rightTabs as name, i}
            <button class:current={i === 0} aria-label={name}>{@render icon(name, 30)}</button>
          {/each}
        </div>
      </div>
      <div class="dock-title out-title">
        <span>Výstup</span>
        <button aria-label="Zastavit"><span class="stop"></span></button>
        <button aria-label="Připnout výstup">{@render icon('pin', 14)}</button>
        <button aria-label="Zavřít výstup">{@render icon('close', 14)}</button>
      </div>
      <div class="output">
        <div class="log">
          <p>Sestava [Sestava002] vytvořeno.</p>
          <p class="note">POZNÁMKA: [Sestava002.Z3ASM] záložní soubor byl úspěšně vytvořen.</p>
          <p>3D rám</p>
          <p>3D rám</p>
          <p>3D rám</p>
        </div>
        <div class="scroll">
          <svg class="icon" width="10" height="6" viewBox="0 0 10 6"><path d="M0 6L5 0 10 6Z" fill="#555" /></svg>
          <span class="thumb"><svg class="icon" width="8" height="8" viewBox="0 0 8 8"><path d="M0 1H8M0 4H8M0 7H8" stroke="#888" /></svg></span>
          <svg class="icon" width="10" height="6" viewBox="0 0 10 6"><path d="M0 0H10L5 6Z" fill="#555" /></svg>
        </div>
      </div>
    </aside>
  </main>

  <footer class="status">
    <span class="prompt">&lt;middle-click&gt; pro dokončení.</span>
    <div class="toggles">
      <button class="on" aria-label="Správce">{@render icon('stTools', 20)}</button>
      <button class="on" aria-label="Zobrazení">{@render icon('stMonitor', 20)}</button>
      <button class="on" aria-label="Výstup">{@render icon('stList', 20)}</button>
    </div>
    <input type="text" aria-label="Příkazový řádek" />
  </footer>
</div>

<style>
  :global(body) {
    margin: 0;
    background: #e1e5e8;
  }

  .app {
    --line: #b9bec7;
    --chrome: #e1e5e8;
    --panel: #dce1e9;
    --paper: #fcfcfd;
    --wide: 'Noto Sans', 'Open Sans', sans-serif;
    display: flex;
    flex-direction: column;
    height: 100vh;
    overflow: hidden;
    font-family: 'Open Sans', 'Noto Sans', sans-serif;
    font-size: 14px;
    line-height: 20px;
    color: #1a1a1a;
    background: var(--chrome);
    border-bottom: 2px solid #4a4a4e;
    box-sizing: border-box;
  }
  .app :global(*) { box-sizing: border-box; }
  .defs { position: absolute; }
  .icon { display: block; flex: none; }

  button, input, select {
    font: inherit;
    color: inherit;
    padding: 0;
    margin: 0;
    border: 0;
    background: none;
    border-radius: 0;
    outline: 0;
  }
  button {
    display: flex;
    align-items: center;
    justify-content: center;
    flex: none;
    white-space: nowrap;
  }
  p, h2, ul { margin: 0; padding: 0; }

  .cell { width: 28px; height: 26px; }
  .drop { display: flex; flex: none; width: 14px; justify-content: center; }
  .on {
    width: 27px;
    height: 26px;
    background: #ffe173;
    border: 1px solid #c99c3c;
  }

  /* title bar */
  .titlebar {
    display: flex;
    align-items: center;
    flex: none;
    height: 33px;
    color: #000;
    font-family: var(--wide);
  }
  .quick { display: flex; align-items: center; width: 307px; padding-left: 4px; }
  .quick > .icon { margin-left: 8px; }
  .quick > .icon:last-child { margin-left: 6px; }
  .logo { margin-right: 7px; }
  .menus { display: flex; gap: 17px; }
  .menus a { color: inherit; text-decoration: none; }
  .doc-title { margin-left: auto; color: #8a8d90; }
  .win { display: flex; gap: 9px; width: 313px; justify-content: flex-end; padding-right: 5px; }

  /* ribbon tabs */
  .tabrow {
    display: flex;
    align-items: stretch;
    flex: none;
    gap: 1px;
    height: 27px;
    border-bottom: 1px solid var(--line);
    color: #444;
  }
  .file-tab {
    width: 91px;
    margin: 0 2px 0 1px;
    background: #2a60b5;
    border: 1px solid #1f4fa3;
    color: #fff;
  }
  .tab { padding: 0 10px; }
  .tab.active {
    height: 27px;
    padding: 0 10px;
    background: var(--paper);
    border: 1px solid var(--line);
    border-bottom: 0;
  }
  .hide { padding: 0 2px; }
  .find {
    display: flex;
    align-items: center;
    width: 180px;
    height: 25px;
    margin-left: auto;
    padding: 0 4px 0 2px;
    background: #fff;
    border: 1px solid var(--line);
  }
  .find input { flex: 1; min-width: 0; }
  input::placeholder { color: #777; opacity: 1; }
  .help { display: flex; gap: 13px; margin-left: 9px; }
  .help button { gap: 6px; }
  .mdi { display: flex; gap: 7px; padding: 0 0 0 9px; }

  /* ribbon */
  .ribbon {
    display: flex;
    flex: none;
    height: 119px;
    background: var(--paper);
    border-bottom: 1px solid var(--line);
  }
  .group {
    display: flex;
    flex-direction: column;
    align-items: center;
    margin: 4px 0 2px;
    padding: 0 4px;
    border-right: 1px solid #d3d6da;
  }
  .group:first-child { padding-left: 8px; }
  .tools { display: flex; height: 88px; }
  .tool {
    position: relative;
    flex-direction: column;
    justify-content: flex-start;
    border: 1px solid transparent;
  }
  .tool-icon { height: 44px; padding-top: 2px; width: 100%; display: flex; justify-content: center; }
  .tool-line {
    display: flex;
    align-items: center;
    justify-content: center;
    gap: 6px;
    height: 20px;
    white-space: nowrap;
  }
  .tool.hot { border-color: #fae291; }
  .tool.hot .tool-icon { background: #fef3cf; border-bottom: 1px solid #fae291; }
  .tool.soft { background: #fdfaec; border-color: #fbf3d2; }
  .tool.marked::after {
    content: '';
    position: absolute;
    inset: -5px -5px -11px -2px;
    border: 5px solid #ed1c24;
    z-index: 1;
  }
  .group-name { margin-top: 2px; color: #6b7280; white-space: nowrap; }

  /* selection bar */
  .selbar {
    display: flex;
    align-items: center;
    flex: none;
    height: 35px;
    padding-left: 4px;
  }
  .grip { width: 2px; height: 18px; margin-right: 6px; border-left: 2px dotted #7f8790; }
  .sep { width: 1px; height: 20px; margin: 0 4px; background: var(--line); }
  .combo {
    display: flex;
    align-items: center;
    width: 165px;
    height: 26px;
    margin: 0 1px;
    padding-right: 6px;
    background: #fff;
    border: 1px solid var(--line);
  }
  .combo select { flex: 1; min-width: 0; padding-left: 3px; appearance: none; opacity: 1; }
  .combo.off { background: #eeefef; border-color: #d2d6da; color: #777; }
  .combo.off > .icon:last-child { opacity: .4; }

  /* docks */
  .work { display: flex; flex: 1; min-height: 0; }
  .left { display: flex; flex-direction: column; flex: none; width: 447px; }
  .dock-title {
    display: flex;
    align-items: center;
    flex: none;
    height: 25px;
    padding: 0 6px;
    gap: 10px;
    color: #444;
  }
  .dock-title span:first-child { margin-right: auto; }
  .left .dock-title { padding-right: 9px; }
  .left-body { display: flex; flex: 1; min-height: 0; }
  .strip { display: flex; flex-direction: column; flex: none; width: 40px; padding-left: 2px; border-top: 1px solid var(--line); }
  .strip button { height: 60px; padding: 0 2px 3px 0; border-right: 1px solid var(--line); border-bottom: 1px solid transparent; }
  .strip button.current { background: var(--paper); border-color: transparent transparent var(--line); }
  .left .strip { background: linear-gradient(90deg, transparent 39px, var(--line) 39px); }
  .cmd { flex: 1; padding: 3px 5px 0 5px; border: 1px solid var(--line); border-left: 0; background: var(--panel); }
  .cmd-bar {
    display: flex;
    gap: 2px;
    height: 33px;
    margin: -3px -5px 0;
    padding: 3px 4px 0 3px;
    background: var(--chrome);
  }
  .cmd-bar button { width: 33px; height: 29px; background: #fff; border: 1px solid var(--line); }
  .cmd-bar .push { margin-left: auto; }
  .cmd-bar .thin { width: 17px; overflow: hidden; }

  .section { margin: 3px 0; border: 1px solid var(--line); background: var(--panel); }
  .section-head {
    height: 29px;
    background: var(--paper);
    border-bottom: 1px solid var(--line);
    font-size: 14px;
    font-weight: 700;
    color: #333;
  }
  .section-head button { height: 28px; gap: 6px; padding-left: 4px; }

  .row { display: flex; align-items: center; height: 27px; }
  .row label { flex: none; width: 131px; }
  .field {
    display: flex;
    align-items: center;
    width: 178px;
    height: 27px;
    padding: 0 7px 0 2px;
    background: #fff;
    border: 1px solid var(--line);
  }
  .field input { flex: 1; min-width: 0; color: #000; }
  .spin { display: flex; flex-direction: column; gap: 8px; margin-left: 8px; }
  .required { display: flex; flex-direction: column; gap: 4px; padding: 4px 8px 4px 4px; }
  .modes { display: flex; gap: 1px; align-self: center; height: 44px; }
  .modes button { width: 45px; height: 45px; background: var(--paper); border: 1px solid var(--line); }
  .modes .chosen { background: #ffe173; border-color: #c99c3c; }
  .required .row label { width: 132px; }
  .more { margin-left: 8px; }
  .required .fetch { margin-left: 12px; }
  .fetch { gap: 8px; }
  .params { padding: 5px 3px 3px; }
  fieldset {
    display: flex;
    flex-direction: column;
    gap: 4px;
    height: 114px;
    min-width: 0;
    margin: 0 0 2px;
    padding: 7px 9px;
    border: 1px solid #8f959d;
    outline: 0;
    box-shadow: 1px 1px 0 #fff;
  }
  fieldset:last-child { margin-bottom: 0; }
  legend { height: 18px; line-height: 18px; margin-left: -1px; padding: 0 2px 0 1px; }
  fieldset .row label { width: 128px; }
  .long { width: 209px; }
  .mid { width: 194px; }
  .tail { margin-left: 5px; }
  .check { display: flex; align-items: center; gap: 6px; }
  .check input {
    appearance: none;
    width: 16px;
    height: 16px;
    border: 1px solid #8f959d;
    background: #cfd4da;
    box-shadow: inset 0 0 0 2px #e4e8ec, inset 0 0 0 3px #b5bcc5;
  }
  .settings { height: 37px; padding-left: 9px; }
  .settings label { width: 128px; }
  .settings .field { width: 218px; }
  .tolerance { height: 34px; padding-left: 8px; }
  .tolerance label { width: 127px; }
  .tolerance .field { width: 251px; }

  /* document area */
  .center { display: flex; flex-direction: column; flex: 1; min-width: 0; margin: 0 1px 0 2px; border-left: 1px solid var(--line); border-right: 1px solid var(--line); }
  .doc-tabs { display: flex; align-items: flex-end; flex: none; height: 26px; border-bottom: 1px solid var(--line); }
  .doc-tab {
    gap: 8px;
    width: 213px;
    height: 26px;
    margin-bottom: -1px;
    padding-left: 20px;
    background: #fff;
    border: 1px solid var(--line);
    border-bottom: 0;
    color: #000;
  }
  .add { width: 28px; height: 24px; }
  .tab-list { width: 24px; height: 24px; margin-left: auto; }
  .canvas {
    position: relative;
    flex: 1;
    min-height: 0;
    margin-bottom: 1px;
    background: linear-gradient(#fff, #fcfcfc 4%, #9d9d9d);
    overflow: hidden;
  }
  .scene { position: absolute; inset: 0; width: 100%; height: 100%; }
  .axis { font-size: 20px; text-anchor: middle; font-family: var(--wide); }
  .view-bar { position: relative; display: flex; align-items: center; justify-content: center; height: 30px; }
  .view-bar button { width: 28px; height: 26px; }
  .view-bar .drop { width: 12px; margin-right: 4px; }
  .ink { width: 20px; height: 11px; background: #000; border: 1px solid #555; }
  .fill { width: 20px; height: 19px; background: #bfe7f6; border: 1px solid #222; }
  .level { width: 144px; gap: 1px; padding: 0 6px 0 8px; }
  .level select { padding-left: 5px; }
  .hint { position: relative; height: 26px; line-height: 16px; padding-left: 21px; color: #000; font-family: var(--wide); }
  .scale { position: absolute; left: 4px; bottom: 0; font-size: 20px; line-height: 22px; color: #000; font-family: var(--wide); }

  .right { display: flex; flex-direction: column; flex: none; width: 410px; }
  .right .dock-title { padding: 0 4px 0 5px; }
  .right-body { display: flex; flex: 1; min-height: 0; }
  .files { flex: 1; padding: 1px 1px 0; border: 1px solid var(--line); background: var(--panel); }
  .nav-bar { display: flex; gap: 4px; margin: -1px -1px 0; padding: 1px 0 0 1px; height: 35px; background: var(--chrome); }
  .nav-bar button { width: 35px; height: 31px; background: var(--paper); border: 1px solid var(--line); }
  .nav-bar button:disabled { background: #eaecee; border-color: #d0d4d8; }
  .tree { height: 87px; margin-bottom: 8px; overflow: hidden; list-style: none; background: #fff; border: 1px solid var(--line); }
  .tree li { display: flex; align-items: center; gap: 3px; height: 23px; padding-left: 7px; color: #000; }
  .tree li > .icon:first-child { margin-right: 3px; }
  .tree li:nth-child(even) { background: #f5f5f5; }
  .folded .section-head { border-bottom: 0; height: 28px; }
  .files .folded { margin-bottom: 2px; margin-top: 2px; }
  .search-row { display: flex; gap: 3px; padding: 3px 2px 2px; }
  .search-row button, .combo-text { height: 31px; background: var(--paper); border: 1px solid var(--line); }
  .search-row button { width: 47px; }
  .combo-text { display: flex; align-items: center; flex: 1; padding: 0 6px 0 4px; background: #fff; }
  .combo-text input { flex: 1; min-width: 0; }
  .files .section { margin-bottom: 2px; }
  .right .strip { width: 33px; padding-left: 0; }
  .right .strip button { border-right: 0; padding: 0 0 3px 2px; }
  .right .out-title { height: 30px; }
  .stop { width: 10px; height: 11px; background: #222; }
  .output { display: flex; flex: none; height: 120px; margin: 0 0 1px 1px; background: #fff; border: 1px solid var(--line); border-right: 0; overflow: hidden; }
  .log { flex: 1; margin-top: -4px; padding-left: 4px; color: #000; font-family: var(--wide); }
  .log .note { color: #0a6e0a; }
  .scroll { display: flex; flex-direction: column; align-items: center; justify-content: space-between; width: 18px; padding: 9px 0; background: #d8dde5; }
  .thumb { display: flex; align-items: center; justify-content: center; width: 18px; height: 71px; background: #e8ebf1; border: 1px solid #8a919c; }

  .status { display: flex; align-items: center; flex: none; height: 34px; border-top: 1px solid var(--line); }
  .prompt { flex: 1; padding-left: 7px; color: #444; font-family: var(--wide); }
  .toggles { display: flex; gap: 8px; align-items: center; height: 30px; padding: 0 10px 0 17px; border-left: 1px solid #777; }
  .status > input { width: 435px; height: 28px; padding: 0 4px; background: #fff; border: 1px solid var(--line); }
</style>
